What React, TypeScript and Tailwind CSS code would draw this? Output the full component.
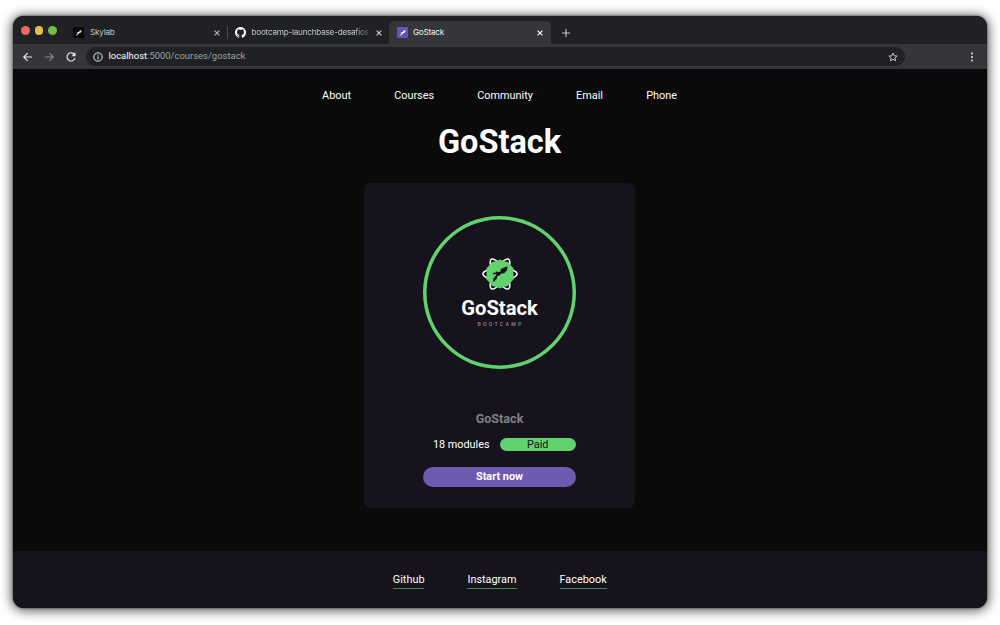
import type { ReactNode } from "react";

function Rocket({ className }: { className: string }) {
  return (
    <svg viewBox="0 0 16 16" className={className} fill="currentColor">
      <path d="M15.5 0.3 9.8 2.2 7.4 5.3 4.6 5 4.1 7.5 1.3 7.6 2.8 9.2 5.2 8.6 4 10.3 1.7 11.5 0.5 16 4.7 12.5 5.5 10.6 8 9.8 8.8 8.3 12.5 7.5 14.2 4.2Z" />
    </svg>
  );
}

function Close({ className = "text-[#b5b8bb]" }: { className?: string }) {
  return (
    <svg viewBox="0 0 8 8" className={`size-2 shrink-0 ${className}`} stroke="currentColor" strokeWidth="1.1" fill="none">
      <path d="M1.6 1.6 6.4 6.4M6.4 1.6 1.6 6.4" />
    </svg>
  );
}

function TabBar() {
  return (
    <div className="flex h-7 shrink-0 items-end bg-[#202124] pl-2 font-['Inter',sans-serif] text-[8.2px] tracking-[-0.01em] text-[#c3c6c9]">
      <div className="flex h-[27px] w-[52px] items-center gap-[5px]">
        <span className="size-[8.5px] rounded-full bg-[#ed6a5e]" />
        <span className="size-[8.5px] rounded-full bg-[#e0c04c]" />
        <span className="size-[8.5px] rounded-full bg-[#72be47]" />
      </div>
      <div className="flex h-[23px] w-[155px] items-center">
        <span className="flex size-[11px] items-center justify-center bg-[#09090a] text-[#e8e8e8]">
          <Rocket className="size-[6px]" />
        </span>
        <span className="ml-[6px] flex-1 tracking-[-0.03em]">Skylab</span>
        <Close />
        <span className="ml-[6px] h-[13px] w-px bg-[#4a4b4e]" />
      </div>
      <div className="flex h-[23px] w-[161px] items-center pl-[7px]">
        <svg viewBox="0 0 16 16" className="size-[11px] shrink-0" fill="#ffffff">
          <path d="M8 0C3.58 0 0 3.58 0 8c0 3.54 2.29 6.53 5.47 7.59.4.07.55-.17.55-.38 0-.19-.01-.82-.01-1.49-2.01.37-2.53-.49-2.69-.94-.09-.23-.48-.94-.82-1.13-.28-.15-.68-.52-.01-.53.63-.01 1.08.58 1.23.82.72 1.21 1.87.87 2.33.66.07-.52.28-.87.51-1.07-1.78-.2-3.64-.89-3.64-3.95 0-.87.31-1.59.82-2.15-.08-.2-.36-1.02.08-2.12 0 0 .67-.21 2.2.82A7.6 7.6 0 0 1 8 3.86c.68 0 1.36.09 2 .27 1.53-1.04 2.2-.82 2.2-.82.44 1.1.16 1.92.08 2.12.51.56.82 1.27.82 2.15 0 3.07-1.87 3.75-3.65 3.95.29.25.54.73.54 1.48 0 1.07-.01 1.93-.01 2.2 0 .21.15.46.55.38A8 8 0 0 0 16 8c0-4.42-3.58-8-8-8" />
        </svg>
        <span className="ml-[5.5px] w-[119.5px] whitespace-nowrap tracking-[-0.03em] [mask-image:linear-gradient(to_right,black_86%,transparent_102%)]">
          bootcamp-launchbase-desafios
        </span>
        <Close className="ml-[4px] text-[#d5d7d9]" />
      </div>
      <div className="flex h-[23px] w-[162px] items-center rounded-t-[5px] bg-[#35363a] pl-2 text-[#f1f3f4]">
        <span className="flex size-[11px] items-center justify-center bg-[#6553b5] text-white">
          <Rocket className="size-[6px]" />
        </span>
        <span className="ml-[5px] flex-1 tracking-[-0.03em]">GoStack</span>
        <Close className="mr-[7px] text-white" />
      </div>
      <div className="flex h-[23px] items-center pl-[11px]">
        <svg viewBox="0 0 8 8" className="size-2" stroke="#c8cacc" strokeWidth="1.1">
          <path d="M4 0V8M0 4H8" />
        </svg>
      </div>
    </div>
  );
}

function Toolbar() {
  return (
    <div className="flex h-[25px] shrink-0 items-center bg-[#35363a] pl-[9px] font-['Roboto',sans-serif]">
      <svg viewBox="0 0 12 12" className="size-3" fill="none" stroke="#e8eaed" strokeWidth="1.15">
        <path d="M10 6H2M5.6 2.2 1.8 6 5.6 9.8" />
      </svg>
      <svg viewBox="0 0 12 12" className="ml-[9px] size-3" fill="none" stroke="#85878a" strokeWidth="1.15">
        <path d="M2 6H10M6.4 2.2 10.2 6 6.4 9.8" />
      </svg>
      <svg viewBox="0 0 12 12" className="ml-[10px] size-3" fill="none" stroke="#e8eaed" strokeWidth="1.2">
        <path d="M9.5 3.6A4.1 4.1 0 1 0 10 7.1" />
        <path d="M10.5 1.3V5.3H6.5Z" fill="#e8eaed" stroke="none" />
      </svg>
      <div className="ml-[9px] flex h-[19px] w-[819px] items-center rounded-full bg-[#202124] pr-[7px] pl-[7px]">
        <svg viewBox="0 0 10 10" className="size-[10px]" fill="none" stroke="#e8eaed" strokeWidth="1">
          <circle cx="5" cy="5" r="4.2" />
          <path d="M5 4.4V7.3M5 2.6V3.6" />
        </svg>
        <span className="ml-[5.5px] flex-1 text-[9.45px] text-[#9aa0a6]">
          <span className="text-white">localhost</span>:5000/courses/gostack
        </span>
        <svg viewBox="0 0 10 10" className="size-[10px]" fill="none" stroke="#d5d7da" strokeWidth="0.9">
          <path d="M5 1 6.15 3.75 9.1 4 6.85 5.9 7.55 8.8 5 7.25 2.45 8.8 3.15 5.9 0.9 4 3.85 3.75Z" />
        </svg>
      </div>
      <svg viewBox="0 0 4 10" className="ml-[64.5px] h-[10px] w-1" fill="#e8eaed">
        <circle cx="2" cy="1.4" r="1" />
        <circle cx="2" cy="5" r="1" />
        <circle cx="2" cy="8.6" r="1" />
      </svg>
    </div>
  );
}

function Emblem() {
  return (
    <svg viewBox="0 0 36 36" className="size-9 shrink-0">
      <g fill="none" stroke="#ffffff" strokeWidth="1.5">
        <ellipse cx="18" cy="18" rx="17.1" ry="5.6" />
        <ellipse cx="18" cy="18" rx="17.1" ry="5.6" transform="rotate(60 18 18)" />
        <ellipse cx="18" cy="18" rx="17.1" ry="5.6" transform="rotate(120 18 18)" />
      </g>
      <path
        d="M18 3.6 22 5.3 26 6.1 28.2 9.1 31.6 12.2 31.3 18 31.6 23.6 28.2 26.8 25.8 30 22 30.7 18 32.4 14 30.7 10.2 30 7.8 26.8 4.4 23.6 4.7 18 4.4 12.2 7.8 9.1 10 6.1 14 5.3Z"
        fill="#61d36e"
      />
      <path
        d="M25.6 10.2 25 14.3 22.2 17.3 18.8 17.8 17.7 19.6 15 20.2 15 22.4 11.4 26.6 11.3 22.4 13.5 20 14.4 18.6 12.8 18 10.6 18.4 11.2 16.8 13.5 16.7 14.1 15.4 16.5 16.1 18.4 15.7 18.8 13 22.2 11.5Z"
        fill="#16131c"
      />
    </svg>
  );
}

function FooterLink({ children }: { children: ReactNode }) {
  return <a className="h-[17px] border-b border-[#3e8b4c] leading-[15px]">{children}</a>;
}

export default function App() {
  return (
    <div className="h-[625px] w-[1000px] overflow-hidden bg-white px-[13px] pt-4">
      <div className="flex h-[592.4px] w-[973.5px] flex-col overflow-hidden rounded-[11px] bg-[#0a0a0a] font-['Roboto',sans-serif] text-[10.86px] text-white shadow-[0_0_2px_rgba(0,0,0,0.75),0_1px_11px_2px_rgba(0,0,0,0.62)]">
        <TabBar />
        <Toolbar />
        <main className="flex h-[482px] shrink-0 flex-col items-center pr-[0.5px]">
          <nav className="mt-[19px] flex h-4 gap-[43.2px] leading-4">
            <a>About</a>
            <a>Courses</a>
            <a>Community</a>
            <a>Email</a>
            <a>Phone</a>
          </nav>
          <h1 className="mt-[19px] h-[38px] text-[32.5px] leading-[38px] font-bold">GoStack</h1>
          <section className="mt-[22px] flex h-[325px] w-[270.5px] flex-col items-center rounded-[7px] bg-[#16131c] pt-[33px]">
            <div className="flex size-[153px] shrink-0 flex-col items-center rounded-full pt-[40px] shadow-[inset_0_0_0_3.5px_#61d36e]">
              <Emblem />
              <span className="mt-[4px] h-6 text-[20.2px] leading-6 font-bold">GoStack</span>
              <span className="mt-[1px] ml-[2px] text-[5.2px] leading-[6px] font-medium tracking-[2.25px] text-[#8f8c95]">BOOTCAMP</span>
            </div>
            <h2 className="mt-[42px] h-4 text-[12.6px] leading-4 font-bold text-[#818084]">GoStack</h2>
            <div className="mt-[11px] flex h-[13px] w-[153px] items-center">
              <span className="w-[76.5px] text-center leading-[13px]">18 modules</span>
              <span className="h-[13px] w-[76.5px] rounded-[6.5px] bg-[#61d36e] text-center leading-[13px] text-[#111111]">Paid</span>
            </div>
            <button className="mt-[16px] h-[19.5px] w-[153px] rounded-full bg-[#6d5bb1] text-[10.86px] leading-[20px] font-bold">
              Start now
            </button>
          </section>
        </main>
        <footer className="flex flex-1 justify-center gap-[43px] bg-[#16131c] pt-[21px]">
          <FooterLink>Github</FooterLink>
          <FooterLink>Instagram</FooterLink>
          <FooterLink>Facebook</FooterLink>
        </footer>
      </div>
    </div>
  );
}
